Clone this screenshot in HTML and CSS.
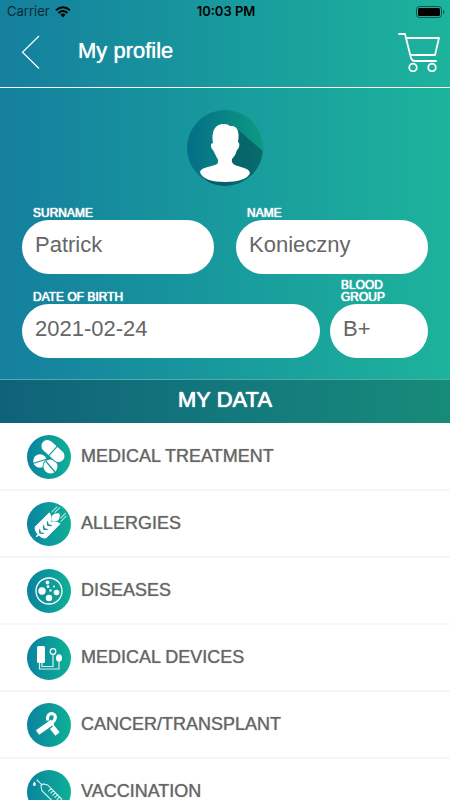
FILE: index.html
```
<!DOCTYPE html>
<html lang="en">
<head>
<meta charset="utf-8">
<meta name="viewport" content="width=device-width, initial-scale=1">
<title>My profile</title>
<link rel="stylesheet" href="styles.css">
</head>
<body>
<svg class="defs" aria-hidden="true">
  <defs>
    <linearGradient id="disc" x1="0" y1="0" x2="1" y2="0"><stop offset="0" stop-color="#0983a0"/><stop offset="1" stop-color="#0fb096"/></linearGradient>
    <linearGradient id="avatar-disc" x1="0" y1="0" x2="1" y2="0"><stop offset="0" stop-color="#046e88"/><stop offset="1" stop-color="#0d9a82"/></linearGradient>
    <linearGradient id="avatar-shade" x1="0" y1="0" x2="1" y2="0"><stop offset="0" stop-color="#06586c"/><stop offset="1" stop-color="#076d6b"/></linearGradient>
    <clipPath id="avatar-clip"><circle cx="38" cy="38" r="38"/></clipPath>
  </defs>
</svg>
<div class="app">
  <div class="top">
    <div class="status">
      <div class="carrier">
        <span>Carrier</span>
        <svg width="16" height="12" viewBox="0 0 16 12" fill="none" stroke="#000" stroke-width="2"><path d="M1 4.3Q8-1.8 15 4.3M3.5 7Q8 3 12.5 7"/><path d="M5.4 8.6Q8 6.4 10.6 8.6L8 11.4Z" fill="#000" stroke="none"/></svg>
      </div>
      <span class="time">10:03 PM</span>
      <svg class="battery" width="29" height="12" viewBox="0 0 29 12"><rect x=".5" y=".5" width="25" height="11" rx="3" fill="none" stroke="#0b574c"/><rect x="2" y="2" width="22" height="8" rx="1.5"/><path d="M27 4v4q1.5-.6 1.5-2T27 4Z" fill="#0b574c"/></svg>
    </div>
    <header class="bar">
      <button class="icon-button" aria-label="Back"><svg width="20" height="34" viewBox="0 0 20 34" fill="none" stroke="#fff" stroke-width="1.2"><path d="M19 1 2.500 17.300 19 33.500"/></svg></button>
      <h1>My profile</h1>
      <button class="icon-button" aria-label="Cart"><svg width="42" height="40" viewBox="0 0 42 40" fill="none" stroke="#fff" stroke-width="1.8" stroke-linecap="round" stroke-linejoin="round"><path d="M1 2h6l6 24q1 3 4 3h21M8 6h33l-4 17H13"/><circle cx="15" cy="35.5" r="3.8"/><circle cx="34" cy="35.5" r="3.8"/></svg></button>
    </header>
    <section class="profile">
      <svg class="avatar" width="76" height="76" viewBox="0 0 76 76" role="img" aria-label="Profile picture">
        <circle cx="38" cy="38" r="38" fill="url(#avatar-disc)"/>
        <g clip-path="url(#avatar-clip)">
          <path d="M50 19 78 43V78H27L14 64 30 54Z" fill="url(#avatar-shade)"/>
          <path d="M26 33C24 21 28 14 37 14Q41 14 43 16C50 15 53 21 51 32Q53 33 52 37 51 40 50 40 49 45 45 49 44 53 48 55C55 58 62 58 63 63 61 69 51 72 38 72S15 69 13 62C14 57 25 57 30 54 32 52 31 49 30 48L26 40Q24 39 24 35 24 33 26 33Z" fill="#fff"/>
        </g>
      </svg>
      <form class="form">
        <div class="fields names">
          <label for="surname">SURNAME</label>
          <label for="name">NAME</label>
          <input id="surname" type="text" value="Patrick">
          <input id="name" type="text" value="Konieczny">
        </div>
        <div class="fields details">
          <label for="birth">DATE OF BIRTH</label>
          <label for="blood">BLOOD GROUP</label>
          <input id="birth" type="text" value="2021-02-24">
          <input id="blood" type="text" value="B+">
        </div>
      </form>
    </section>
  </div>
  <h2>MY DATA</h2>
  <ul class="list">
    <li><a href="#treatment">
      <svg width="44" height="44" viewBox="0 0 44 44"><circle cx="22" cy="22" r="22" fill="url(#disc)"/><circle cx="13" cy="26" r="6.8" fill="#fff"/><circle cx="23.5" cy="31.5" r="8" fill="#129999"/><circle cx="23.5" cy="31.5" r="7" fill="#fff"/><g transform="rotate(42 26 16)"><rect x="12" y="9.5" width="28" height="13" rx="6.5" fill="#fff" stroke="#129a9a"/><path d="M26 9v14" stroke="#129a9a" stroke-width="1.2"/></g><path d="m6 28.500 14-4.500M19 26.500l9 10.500" stroke="#129999" stroke-width="1.2"/></svg>
      MEDICAL TREATMENT</a></li>
    <li><a href="#allergies">
      <svg width="44" height="44" viewBox="0 0 44 44"><circle cx="22" cy="22" r="22" fill="url(#disc)"/><g transform="rotate(45 22 22)"><path d="M22 40V35" stroke="#fff" stroke-width="1.500"/><path d="M22 7c-5 4-5 8 0 11 5-3 5-7 0-11" fill="#fff"/><path d="M14.500 14q5 1 7.500 6 2.500-5 7.500-6v20q-2 3-7.500 3t-7.500-3Z" fill="#fff" stroke="#fff" stroke-linejoin="round"/><path d="M18.500 20.500q.5 2.500 3.500 4 3-1.500 3.500-4L22 22.500ZM18.500 26q.5 2.500 3.500 4 3-1.500 3.500-4L22 28ZM18.500 31.500q.5 2.500 3.500 4 3-1.500 3.500-4L22 33.500Z" fill="#128f9c"/><path d="M15.500 12V4M18 10V2.500M26 10V2.500M28.500 12V4" stroke="#bfe7e3" stroke-width="1"/></g></svg>
      ALLERGIES</a></li>
    <li><a href="#diseases">
      <svg width="44" height="44" viewBox="0 0 44 44"><circle cx="22" cy="22" r="22" fill="url(#disc)"/><circle cx="22" cy="22" r="13" fill="none" stroke="#fff" stroke-width="1.300"/><g fill="#fff"><circle cx="15" cy="22" r="3.700"/><circle cx="22" cy="29" r="3.200"/><circle cx="29.500" cy="23.500" r="2.800"/><circle cx="20.500" cy="13.500" r="1.900"/><circle cx="21" cy="17.700" r="1.400"/><circle cx="23.500" cy="21.500" r="1.200"/><circle cx="27" cy="17.500" r="1"/></g></svg>
      DISEASES</a></li>
    <li><a href="#devices">
      <svg width="44" height="44" viewBox="0 0 44 44"><circle cx="22" cy="22" r="22" fill="url(#disc)"/><rect x="10" y="10" width="8" height="17" rx="1.500" fill="#fff"/><ellipse cx="32" cy="22" rx="3" ry="3.800" fill="#fff"/><g fill="none" stroke="#d8f1ee" stroke-width="1.200"><circle cx="26" cy="15.500" r="2.800" stroke="#fff"/><path d="M12.500 27v6H32v-8M26 19v11.500H15V27"/></g></svg>
      MEDICAL DEVICES</a></li>
    <li><a href="#cancer">
      <svg width="44" height="44" viewBox="0 0 44 44"><circle cx="22" cy="22" r="22" fill="url(#disc)"/><g fill="none" stroke="#fff"><path d="m21 19 9.500 12" stroke-width="5.500"/><path d="m12 29.500 12-8.500" stroke="#149c9a" stroke-width="6.500"/><path d="M20.500 17.500Q20 10.500 25 10.500 30 12 27.500 17L24 21" stroke-width="3.200"/><path d="m10.500 29.500 15-10.500" stroke-width="5.500"/></g></svg>
      CANCER/TRANSPLANT</a></li>
    <li><a href="#vaccination">
      <svg width="44" height="44" viewBox="0 0 44 44"><circle cx="22" cy="22" r="22" fill="url(#disc)"/><path d="M7 12q-2 3 0 4 3 0 1-4ZM10 9q-1 2 .5 2.500 1.500-.5-.5-2.500Z" fill="#fff"/><g fill="none" stroke="#d9f2f0" stroke-width="1.100" transform="rotate(45 10 10)"><path d="M11 10h6M17 8.500 21 6h20v8H21l-4-2.500ZM26 6v4M29 6v4M32 6v4M35 6v4M38 6v4M41 10h6"/></g></svg>
      VACCINATION</a></li>
  </ul>
</div>
</body>
</html>
```
FILE: styles.css
```
* { box-sizing: border-box; }

body {
  margin: 0;
  font-family: "Liberation Sans", Arial, sans-serif;
  background: #fff;
}

.defs { position: absolute; width: 0; height: 0; }

.app {
  display: flex;
  flex-direction: column;
  height: 100vh;
  overflow: hidden;
}

.top {
  flex: none;
  color: #fff;
  background: linear-gradient(90deg, #147f9e, #189a9d 50%, #1db39c);
}

.status {
  display: grid;
  grid-template-columns: 1fr auto 1fr;
  align-items: center;
  height: 23px;
  padding: 0 5px 0 7px;
  font: 13px/23px Inter, sans-serif;
  color: #000;
}
.carrier { display: flex; align-items: center; gap: 5px; color: #0a2b33; }
.time { font-weight: 600; }
.battery { justify-self: end; }

.bar {
  display: flex;
  align-items: center;
  height: 65px;
  padding: 0 10px 6px 20px;
  border-bottom: 1px solid #fff;
}
.icon-button {
  display: flex;
  padding: 0;
  border: 0;
  background: none;
}
h1 {
  flex: 1;
  margin: 0;
  padding: 0 0 2px 38px;
  font-size: 22px;
  font-weight: 400;
  line-height: 24px;
  text-shadow: 0 0 1px #fff;
}

.profile { padding: 22px 22px 21px; }
.avatar { display: block; margin: 0 auto 21px; }

.form { display: grid; gap: 5px; }
.fields { display: grid; row-gap: 1px; }
.names { grid-template-columns: 1fr 1fr; column-gap: 22px; }
.details { grid-template-columns: 1fr 98px; column-gap: 10px; }
label {
  align-self: end;
  padding: 0 11px;
  font-size: 12px;
  line-height: 12px;
  text-shadow: 0 0 1px #fff, 0 0 1px #fff;
}
input {
  width: 100%;
  min-width: 0;
  height: 54px;
  padding: 0 13px 4px;
  border: 0;
  border-radius: 27px;
  background: #fff;
  color: #666;
  font: 22px "Liberation Sans", Arial, sans-serif;
}

h2 {
  flex: none;
  margin: 0;
  height: 44px;
  border-top: 1px solid #55aab0;
  background: linear-gradient(90deg, #0f6279, #13787c 50%, #178b79);
  color: #fff;
  font-size: 22px;
  font-weight: 400;
  line-height: 39px;
  text-align: center;
  text-shadow: 0 0 1px #fff, 0 0 1px #fff;
}

.list {
  margin: 0;
  padding: 1px 0 0;
  list-style: none;
}
.list a {
  display: flex;
  align-items: center;
  gap: 10px;
  height: 67px;
  padding: 0 27px;
  border-bottom: 2px solid #f6f6f6;
  color: #666;
  font-size: 18px;
  text-decoration: none;
  text-shadow: 0 0 1px #888;
}
.list svg { flex: none; }
```
